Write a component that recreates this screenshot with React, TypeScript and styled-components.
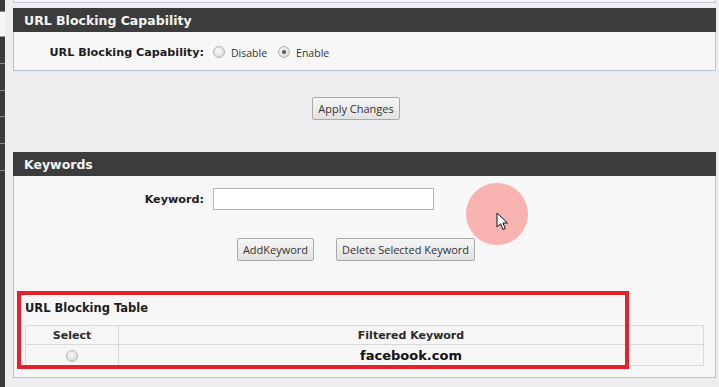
import styled, { createGlobalStyle } from "styled-components";

const GlobalStyle = createGlobalStyle`
  html, body {
    margin: 0;
    padding: 0;
    height: 387px;
    overflow: hidden;
    background: #eeedf0;
  }
  body {
    font-family: "DejaVu Sans", Verdana, sans-serif;
    color: #222;
  }
`;

const Page = styled.div`
  position: relative;
  display: flex;
  height: 387px;
  width: 719px;
`;

const Sidebar = styled.div`
  width: 5px;
  background: #3a3a3a;
  display: flex;
  flex-direction: column;
`;

const SideItem = styled.div<{ $light?: boolean; $h: number }>`
  height: ${(p) => p.$h}px;
  flex-shrink: 0;
  background: ${(p) => (p.$light ? "#f7f7f7" : "#3a3a3a")};
  border-bottom: 1px solid ${(p) => (p.$light ? "#9a9a9a" : "#8a8a8a")};
`;

const Main = styled.div`
  flex: 1;
  display: flex;
  flex-direction: column;
  padding: 0 3px 0 8px;
`;

const PrevPanelEdge = styled.div`
  height: 2px;
  background: #f6f6f8;
  border: 1px solid #bcc7d6;
  border-top: none;
`;

const Panel = styled.section<{ $top: number }>`
  margin-top: ${(p) => p.$top}px;
  display: flex;
  flex-direction: column;
`;

const PanelHeader = styled.div`
  height: 24px;
  background: #3c3c3c;
  color: #f4f4f4;
  font-weight: bold;
  font-size: 12.5px;
  display: flex;
  align-items: center;
  padding-left: 11px;
`;

const PanelBody = styled.div<{ $h: number }>`
  height: ${(p) => p.$h}px;
  box-sizing: border-box;
  background: #f7f7f7;
  border: 1px solid #b7c3d3;
  border-top: none;
  display: flex;
  flex-direction: column;
`;

const FormRow = styled.div<{ $pad: number }>`
  display: grid;
  grid-template-columns: 190px 1fr;
  column-gap: 9px;
  align-items: center;
  padding-top: ${(p) => p.$pad}px;
`;

const Label = styled.label`
  text-align: right;
  font-weight: bold;
  font-size: 11.2px;
  color: #1c1c1c;
`;

const RadioGroup = styled.div`
  display: flex;
  align-items: center;
`;

const Radio = styled.span<{ $checked?: boolean }>`
  width: 10px;
  height: 10px;
  border-radius: 50%;
  border: 1px solid #b4b4b4;
  background: radial-gradient(circle at 40% 35%, #fafafa 0%, #dedede 70%, #cfcfcf 100%);
  display: inline-flex;
  align-items: center;
  justify-content: center;
  box-sizing: content-box;
  &::after {
    content: "";
    width: 4px;
    height: 4px;
    border-radius: 50%;
    background: ${(p) => (p.$checked ? "#555" : "transparent")};
  }
`;

const RadioText = styled.span`
  font-family: "Open Sans", "DejaVu Sans", sans-serif;
  font-size: 10.5px;
  color: #333;
  margin: 2px 11px 0 6px;
`;

const TextInput = styled.input`
  width: 221px;
  height: 22px;
  box-sizing: border-box;
  border: 1px solid #b6b6b6;
  background: #fff;
  margin: 0;
`;

const ButtonRow = styled.div<{ $top: number; $bottom: number; $gap: number }>`
  display: flex;
  justify-content: center;
  gap: ${(p) => p.$gap}px;
  padding: ${(p) => p.$top}px 17px ${(p) => p.$bottom}px 0;
`;

const Button = styled.button`
  height: 23px;
  padding: 0 5px;
  font-family: "Open Sans", "DejaVu Sans", sans-serif;
  font-size: 11px;
  color: #333;
  background: linear-gradient(#f6f6f6, #e2e2e2);
  border: 1px solid #a9a9a9;
  border-radius: 2px;
`;

const TableSection = styled.div`
  margin-top: auto;
  padding: 0 11px 11px;
`;

const TableTitle = styled.div`
  font-weight: bold;
  font-size: 11.5px;
  color: #1c1c1c;
  margin-bottom: 10px;
`;

const Table = styled.table`
  width: 100%;
  border-collapse: collapse;
  background: #f6f6f6;
`;

const Th = styled.th<{ $w?: number }>`
  width: ${(p) => (p.$w ? `${p.$w}px` : "auto")};
  height: 18px;
  padding: 0;
  border: 1px solid #d9d9d9;
  font-size: 11px;
  font-weight: bold;
  color: #2a2a2a;
  text-align: center;
`;

const Td = styled.td<{ $strong?: boolean }>`
  height: 20px;
  padding: 0;
  border: 1px solid #d9d9d9;
  text-align: center;
  vertical-align: middle;
  font-size: ${(p) => (p.$strong ? "13px" : "11px")};
  font-weight: ${(p) => (p.$strong ? "bold" : "normal")};
  color: #111;
`;

const Highlight = styled.div`
  position: absolute;
  left: 466px;
  top: 183px;
  width: 62px;
  height: 62px;
  border-radius: 50%;
  background: #f8b3b0;
`;

const Cursor = styled.svg`
  position: absolute;
  left: 496px;
  top: 212px;
`;

const RedFrame = styled.div`
  position: absolute;
  left: 17px;
  top: 291px;
  width: 612px;
  height: 78px;
  box-sizing: border-box;
  border: 4px solid #e6212b;
`;

export default function App() {
  return (
    <>
      <GlobalStyle />
      <Page>
        <Sidebar>
          <SideItem $h={11} />
          <SideItem $h={24} $light />
          <SideItem $h={26} />
          <SideItem $h={26} />
          <SideItem $h={25} />
          <SideItem $h={26} />
          <SideItem $h={26} />
        </Sidebar>
        <Main>
          <PrevPanelEdge />
          <Panel $top={5}>
            <PanelHeader>URL Blocking Capability</PanelHeader>
            <PanelBody $h={39}>
              <FormRow $pad={12}>
                <Label>URL Blocking Capability:</Label>
                <RadioGroup>
                  <Radio />
                  <RadioText>Disable</RadioText>
                  <Radio $checked />
                  <RadioText>Enable</RadioText>
                </RadioGroup>
              </FormRow>
            </PanelBody>
          </Panel>
          <ButtonRow $top={26} $bottom={32} $gap={0}>
            <Button>Apply Changes</Button>
          </ButtonRow>
          <Panel $top={0}>
            <PanelHeader>Keywords</PanelHeader>
            <PanelBody $h={202}>
              <FormRow $pad={12}>
                <Label>Keyword:</Label>
                <TextInput type="text" />
              </FormRow>
              <ButtonRow $top={28} $bottom={0} $gap={22}>
                <Button>AddKeyword</Button>
                <Button>Delete Selected Keyword</Button>
              </ButtonRow>
              <TableSection>
                <TableTitle>URL Blocking Table</TableTitle>
                <Table>
                  <thead>
                    <tr>
                      <Th $w={92}>Select</Th>
                      <Th>Filtered Keyword</Th>
                    </tr>
                  </thead>
                  <tbody>
                    <tr>
                      <Td>
                        <Radio />
                      </Td>
                      <Td $strong>facebook.com</Td>
                    </tr>
                  </tbody>
                </Table>
              </TableSection>
            </PanelBody>
          </Panel>
        </Main>
        <Highlight />
        <Cursor width="13" height="19" viewBox="0 0 13 19">
          <path
            d="M1 1 L1 15 L4.5 11.8 L7 17.5 L9.3 16.5 L6.9 11 L11.5 11 Z"
            fill="#fff"
            stroke="#111"
            strokeWidth="1"
            strokeLinejoin="round"
          />
        </Cursor>
        <RedFrame />
      </Page>
    </>
  );
}
